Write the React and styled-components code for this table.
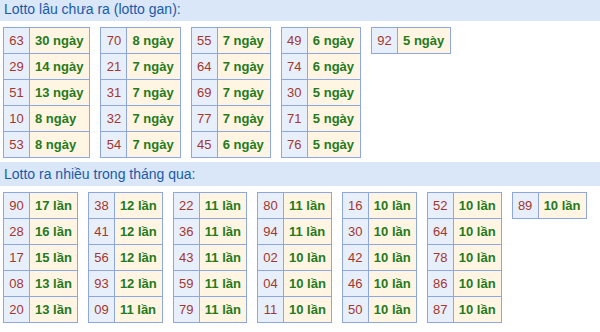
import React from "react";
import styled, { createGlobalStyle } from "styled-components";

const GlobalStyle = createGlobalStyle`
  html, body { margin: 0; padding: 0; background: #ffffff; }
  body { font-family: "Liberation Sans", Arial, sans-serif; overflow: hidden; }
`;

const Page = styled.div`
  width: 600px;
  height: 332px;
  overflow: hidden;
  display: flex;
  flex-direction: column;
`;

const SectionTitle = styled.div`
  box-sizing: border-box;
  height: 24px;
  padding: 1px 0 0 4px;
  line-height: 23px;
  background: #d9e7f8;
  color: #1c5aa8;
  font-size: 14px;
  margin-top: ${(p) => (p.$first ? "-3px" : "0")};
`;

const TablesRow = styled.div`
  display: flex;
  align-items: flex-start;
  gap: 10px;
  padding-left: 3px;
  margin: 6px 0 4px;
`;

const Table = styled.table`
  border-collapse: collapse;
  font-size: 13px;
`;

const NumCell = styled.td`
  width: 25px;
  padding: 0;
  line-height: 25px;
  text-align: center;
  border: 1px solid #8fa7e0;
  background: #e7effb;
  color: #a3362f;
`;

const ValCell = styled.td`
  padding: 0 ${(p) => p.$padRight}px 0 5px;
  line-height: 25px;
  white-space: nowrap;
  border: 1px solid #8fa7e0;
  background: #fff5e2;
  color: #247a1c;
  font-weight: bold;
`;

const gan = [
  [["63", 30], ["29", 14], ["51", 13], ["10", 8], ["53", 8]],
  [["70", 8], ["21", 7], ["31", 7], ["32", 7], ["54", 7]],
  [["55", 7], ["64", 7], ["69", 7], ["77", 7], ["45", 6]],
  [["49", 6], ["74", 6], ["30", 5], ["71", 5], ["76", 5]],
  [["92", 5]],
];

const nhieu = [
  [["90", 17], ["28", 16], ["17", 15], ["08", 13], ["20", 13]],
  [["38", 12], ["41", 12], ["56", 12], ["93", 12], ["09", 11]],
  [["22", 11], ["36", 11], ["43", 11], ["59", 11], ["79", 11]],
  [["80", 11], ["94", 11], ["02", 10], ["04", 10], ["11", 10]],
  [["16", 10], ["30", 10], ["42", 10], ["46", 10], ["50", 10]],
  [["52", 10], ["64", 10], ["78", 10], ["86", 10], ["87", 10]],
  [["89", 10]],
];

function LottoTable({ rows, unit, padRight }) {
  return (
    <Table>
      <tbody>
        {rows.map(([num, count]) => (
          <tr key={num}>
            <NumCell>{num}</NumCell>
            <ValCell $padRight={padRight}>
              {count} {unit}
            </ValCell>
          </tr>
        ))}
      </tbody>
    </Table>
  );
}

export default function App() {
  return (
    <Page>
      <GlobalStyle />
      <SectionTitle $first>Lotto lâu chưa ra (lotto gan):</SectionTitle>
      <TablesRow>
        {gan.map((rows, i) => (
          <LottoTable key={i} rows={rows} unit="ngày" padRight={6} />
        ))}
      </TablesRow>
      <SectionTitle>Lotto ra nhiều trong tháng qua:</SectionTitle>
      <TablesRow>
        {nhieu.map((rows, i) => (
          <LottoTable key={i} rows={rows} unit="lần" padRight={5} />
        ))}
      </TablesRow>
    </Page>
  );
}
